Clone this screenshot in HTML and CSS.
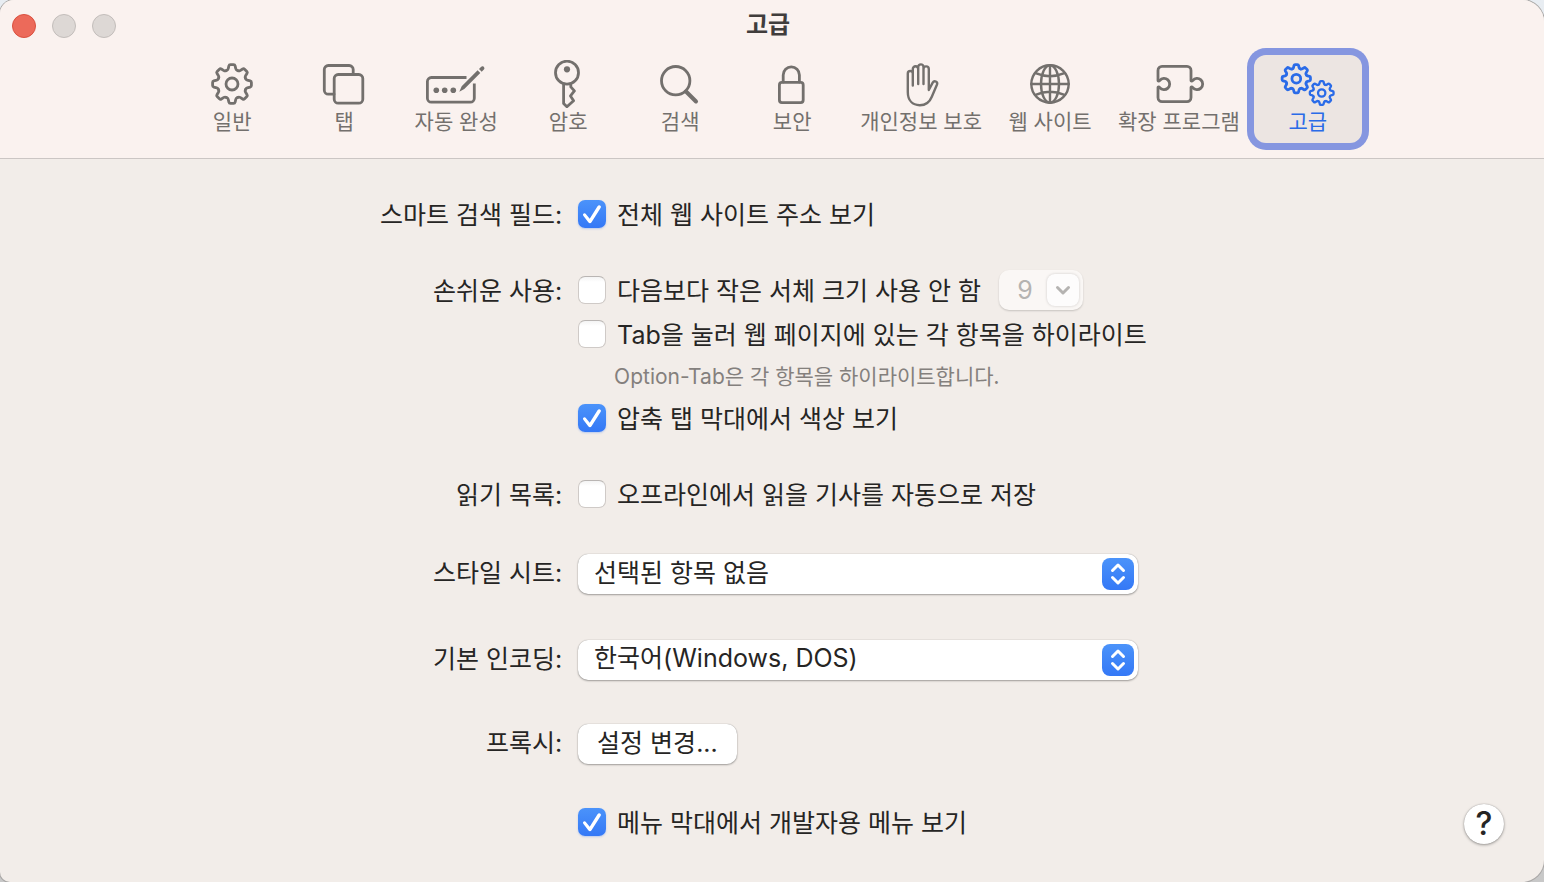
FILE: index.html
```html
<!DOCTYPE html>
<html lang="ko">
<head>
<meta charset="utf-8">
<title>고급</title>
<meta name="viewport" content="width=device-width, initial-scale=1">
<link rel="stylesheet" href="styles.css">
</head>
<body>
<svg class="defs" aria-hidden="true">
  <defs>
    <path id="tooth" d="M-5.6-13.5Q-4.1-13.9-3.8-15.2L-3.1-18.2Q-2.8-19.4-1.6-19.4H1.6Q2.8-19.4 3.1-18.2L3.8-15.2Q4.1-13.9 5.6-13.5"/>
    <g id="gear">
      <use href="#tooth"/><use href="#tooth" transform="rotate(45)"/><use href="#tooth" transform="rotate(90)"/><use href="#tooth" transform="rotate(135)"/>
      <use href="#tooth" transform="rotate(180)"/><use href="#tooth" transform="rotate(225)"/><use href="#tooth" transform="rotate(270)"/><use href="#tooth" transform="rotate(315)"/>
      <circle r="6"/>
    </g>
  </defs>
</svg>
<div class="window">
  <header class="header">
    <div class="titlebar">
      <div class="lights">
        <button class="light light--close" type="button" aria-label="닫기"></button>
        <button class="light" type="button" aria-label="최소화" disabled></button>
        <button class="light" type="button" aria-label="확대" disabled></button>
      </div>
      <h1 class="title">고급</h1>
    </div>
    <nav class="toolbar">
      <button class="tool" type="button">
        <svg class="icon" viewBox="0 0 64 48"><use href="#gear" transform="translate(32 24)"/></svg>
        <span>일반</span>
      </button>
      <button class="tool" type="button">
        <svg class="icon" viewBox="0 0 64 48"><path d="M41.2 14V9.5a4 4 0 0 0-4-4H16.3a4 4 0 0 0-4 4v20.700a4 4 0 0 0 4 4H22"/><rect x="22.200" y="14.500" width="28.600" height="28.700" rx="4"/></svg>
        <span>탭</span>
      </button>
      <button class="tool" type="button">
        <svg class="icon" viewBox="0 0 64 48"><path class="butt" d="M42.500 17.500H7.400a4 4 0 0 0-4 4v16.700a4 4 0 0 0 4 4h38.900a4 4 0 0 0 4-4V23.500"/><g class="solid"><circle cx="12.300" cy="30.300" r="2.800"/><circle cx="20.700" cy="30.300" r="2.800"/><circle cx="29.300" cy="30.300" r="2.800"/><path d="M35.300 31.700l2.400-5.500L53.600 10.200l2.700 2.700L40.300 29zM55 9l2.200-2.200c1.700-1.700 4.400 1 2.700 2.700L57.700 11.700z"/></g></svg>
        <span>자동 완성</span>
      </button>
      <button class="tool" type="button">
        <svg class="icon" viewBox="0 0 64 48"><circle cx="31" cy="12.700" r="11.500"/><circle class="solid" cx="31" cy="9.300" r="3.100"/><path d="M27.600 24v19.500l3.300 3.200 6.700-6-3.100-4.800 3.900-5-3.600-4V24"/></svg>
        <span>암호</span>
      </button>
      <button class="tool" type="button">
        <svg class="icon" viewBox="0 0 64 48"><circle cx="27.700" cy="20.700" r="14.200"/><path class="thick" d="M38 31.500L48 41.500"/></svg>
        <span>검색</span>
      </button>
      <button class="tool" type="button">
        <svg class="icon" viewBox="0 0 64 48"><rect x="19.400" y="22.400" width="23.800" height="20.200" rx="2.500"/><path d="M23.200 22v-7a8.100 8.100 0 0 1 16.200 0v7"/></svg>
        <span>보안</span>
      </button>
      <button class="tool" type="button">
        <svg class="icon icon--fine" viewBox="0 0 64 48"><path d="M23.800 25.500V13.500a2.500 2.500 0 0 0-5 0V32c0 8.500 4.800 13.200 12 13.200 6.800 0 9.800-3 12-8.500L48 24.500c1-2.700-2.700-4.700-4.300-1.800L39.800 30V9a2.600 2.600 0 0 0-5.300 0M34.500 24V7a2.600 2.600 0 0 0-5.300 0v17M29.200 9a2.700 2.700 0 0 0-5.400 0v5"/></svg>
        <span>개인정보 보호</span>
      </button>
      <button class="tool" type="button">
        <svg class="icon icon--fine" viewBox="0 0 64 48"><circle cx="32" cy="24" r="18.700"/><ellipse cx="32" cy="24" rx="9" ry="18.700"/><path d="M32 5.300v37.400M13.300 24h37.400M17.500 13.200q14.500 6 29 0M17.500 34.800q14.500-6 29 0"/></svg>
        <span>웹 사이트</span>
      </button>
      <button class="tool" type="button">
        <svg class="icon" viewBox="0 0 64 48"><path d="M11 20.500V10.400a4 4 0 0 1 4-4h25a4 4 0 0 1 4 4v10.100c0 .8 1 .7 1.700 0a5.600 5.600 0 1 1 0 7c-.7-.7-1.700-.8-1.700 0v10.100a4 4 0 0 1-4 4H15a4 4 0 0 1-4-4V27.500c0-.8 1-.7 1.700 0a5.600 5.600 0 1 0 0-7c-.7.7-1.700.8-1.700 0z"/></svg>
        <span>확장 프로그램</span>
      </button>
      <button class="tool tool--active" type="button" aria-current="page">
        <svg class="icon icon--pair" viewBox="0 0 64 48"><use href="#gear" transform="translate(20.300 18.700) scale(.73)"/><use href="#gear" transform="translate(45.700 33) scale(.61)"/></svg>
        <span>고급</span>
      </button>
    </nav>
  </header>

  <main class="content">
    <form class="form">
      <div class="row">
        <span class="label">스마트 검색 필드<span class="latin">:</span></span>
        <div class="options">
          <label class="check"><input type="checkbox" checked><span class="check-text">전체 웹 사이트 주소 보기</span></label>
        </div>
      </div>
      <div class="row">
        <span class="label label--tall">손쉬운 사용<span class="latin">:</span></span>
        <div class="options">
          <div class="inline">
            <label class="check"><input type="checkbox"><span class="check-text">다음보다 작은 서체 크기 사용 안 함</span></label>
            <div class="combo">
              <input class="combo-input" type="text" value="9" aria-label="최소 서체 크기" disabled>
              <button class="combo-button" type="button" aria-label="서체 크기 목록" disabled>
                <svg viewBox="0 0 32 32"><path d="M10.500 13.500l5.500 5.500 5.500-5.500"/></svg>
              </button>
            </div>
          </div>
          <label class="check"><input type="checkbox" aria-describedby="tab-hint"><span class="check-text"><span class="latin">Tab</span>을 눌러 웹 페이지에 있는 각 항목을 하이라이트</span></label>
          <p class="hint" id="tab-hint"><span class="latin">Option-Tab</span>은 각 항목을 하이라이트합니다.</p>
          <label class="check"><input type="checkbox" checked><span class="check-text">압축 탭 막대에서 색상 보기</span></label>
        </div>
      </div>
      <div class="row row--list">
        <span class="label">읽기 목록<span class="latin">:</span></span>
        <div class="options">
          <label class="check"><input type="checkbox"><span class="check-text">오프라인에서 읽을 기사를 자동으로 저장</span></label>
        </div>
      </div>
      <div class="row row--popup">
        <label class="label label--field" for="stylesheet">스타일 시트<span class="latin">:</span></label>
        <div class="popup">
          <select class="popup-select" id="stylesheet"><option>선택된 항목 없음</option></select>
          <svg class="popup-arrows" viewBox="0 0 32 32" aria-hidden="true"><path d="M10.500 12.500L16 7l5.500 5.500M10.500 19.500L16 25l5.500-5.500"/></svg>
        </div>
      </div>
      <div class="row row--popup">
        <label class="label label--field" for="encoding">기본 인코딩<span class="latin">:</span></label>
        <div class="popup">
          <select class="popup-select popup-select--latin" id="encoding"><option>한국어(Windows, DOS)</option></select>
          <svg class="popup-arrows" viewBox="0 0 32 32" aria-hidden="true"><path d="M10.500 12.500L16 7l5.500 5.500M10.500 19.500L16 25l5.500-5.500"/></svg>
        </div>
      </div>
      <div class="row row--action">
        <span class="label label--field" id="proxy">프록시<span class="latin">:</span></span>
        <div class="options">
          <button class="push" type="button" aria-describedby="proxy">설정 변경<span class="latin">...</span></button>
        </div>
      </div>
      <div class="row row--action">
        <span></span>
        <div class="options">
          <label class="check"><input type="checkbox" checked><span class="check-text">메뉴 막대에서 개발자용 메뉴 보기</span></label>
        </div>
      </div>
    </form>
    <button class="help" type="button" aria-label="도움말">?</button>
  </main>
</div>
</body>
</html>
```
FILE: styles.css
```css
:root {
  --korean: "Noto Sans CJK KR", sans-serif;
  --latin: Inter, "Noto Sans CJK KR", sans-serif;
  --ink: #262524;
  --muted: #73706d;
  --blue: #2a6be8;
  --chip: linear-gradient(#4b93fa, #3478f6);
}

* {
  box-sizing: border-box;
}

body {
  margin: 0;
  background: linear-gradient(#e8edf2, #c8c8c8);
  color: var(--ink);
  font-family: var(--korean);
  font-size: 25px;
  line-height: 28px;
}

button,
input,
select {
  margin: 0;
  padding: 0;
  border: 0;
  color: inherit;
  font: inherit;
}

.defs {
  position: absolute;
  width: 0;
  height: 0;
}

.latin {
  font-family: var(--latin);
  line-height: 20px;
}

.window {
  display: flex;
  flex-direction: column;
  min-height: 100vh;
  overflow: hidden;
  border-radius: 14px 22px 22px 10px;
  background: #f2ede9;
  box-shadow: 0 0 0 1px #a9a7a6;
}

.header {
  padding-bottom: 15px;
  border-bottom: 1px solid #cbc6c4;
  background: #faf2ef;
}

.titlebar {
  display: grid;
  grid-template-columns: 1fr auto 1fr;
  align-items: center;
  height: 52px;
  padding: 0 20px 0 12px;
}

.lights {
  display: flex;
  gap: 16px;
}

.light {
  width: 24px;
  height: 24px;
  border: 1px solid #c2bdba;
  border-radius: 50%;
  background: #ddd8d5;
}

.light--close {
  border-color: #d9503f;
  background: #ec6a5a;
}

.title {
  margin: 0;
  padding-bottom: 6px;
  color: #403d3c;
  font-size: 24px;
  font-weight: 700;
  line-height: 28px;
}

.toolbar {
  display: flex;
  justify-content: center;
  gap: 4px;
  padding: 3px 4px 0 0;
}

.tool {
  display: flex;
  flex-direction: column;
  align-items: center;
  min-width: 108px;
  height: 88px;
  padding: 5px 10px 0;
  border-radius: 12px;
  background: none;
  color: var(--muted);
  font-size: 21px;
  line-height: 24px;
  white-space: nowrap;
}

.tool--active {
  background: #ece5e2;
  color: var(--blue);
  box-shadow: 0 0 0 7px #8596e0;
}

.icon {
  width: 64px;
  height: 48px;
  flex: none;
  fill: none;
  stroke: currentColor;
  stroke-width: 2.8;
  stroke-linecap: round;
  stroke-linejoin: round;
}

.icon--fine {
  stroke-width: 2.4;
}

.icon--pair {
  stroke-width: 3.8;
}

.icon .solid {
  fill: currentColor;
  stroke: none;
}

.icon .butt {
  stroke-linecap: butt;
}

.icon .thick {
  stroke-width: 4;
}

.content {
  display: grid;
  flex: 1;
  grid-template-columns: 1fr auto 1fr;
  align-content: start;
  padding: 41px 40px 38px 14px;
}

.form {
  display: grid;
  grid-column: 2;
  grid-template-columns: auto 560px;
  gap: 42px 16px;
  padding-bottom: 8px;
}

.row {
  display: grid;
  grid-column: 1 / -1;
  grid-template-columns: subgrid;
  align-items: start;
}

.row--list {
  margin-top: 6px;
}

.row--popup {
  margin-top: 4px;
}

.row--action {
  margin-top: 2px;
}

.label {
  line-height: 26px;
  text-align: right;
  white-space: nowrap;
}

.label--tall {
  line-height: 38px;
}

.label--field {
  line-height: 34px;
}

.options {
  display: flex;
  flex-direction: column;
  align-items: flex-start;
  gap: 10px;
}

.inline {
  display: flex;
  align-items: center;
  gap: 18px;
}

.check {
  display: flex;
  align-items: center;
  gap: 11px;
  height: 28px;
  white-space: nowrap;
}

.check-text {
  padding-bottom: 2px;
}

.check input {
  width: 28px;
  height: 28px;
  flex: none;
  appearance: none;
  border: 1px solid #cfcac7;
  border-top-color: #b9b5b3;
  border-radius: 7px;
  background: linear-gradient(#f4f4f4, #fff 5px);
}

.check input:checked {
  border: 0;
  background: var(--chip);
  box-shadow: 0 1px 2px rgb(52 120 246 / 30%);
}

.check input:checked::before {
  display: block;
  width: 28px;
  height: 28px;
  background: #fff;
  clip-path: path("M5.200 15.800C4 14.200 6.400 12.300 7.700 13.900L11.600 18.800L19.600 6C20.800 4.200 23.700 5.800 22.600 7.700L13.400 22.200C12.600 23.400 11.200 23.400 10.400 22.400Z");
  content: "";
}

.hint {
  height: 36px;
  margin: 0;
  padding-left: 36px;
  color: #84807d;
  font-size: 21px;
  line-height: 34px;
  white-space: nowrap;
}

.combo {
  display: flex;
  align-items: center;
  width: 84px;
  height: 40px;
  padding-right: 4px;
  border-radius: 10px;
  background: #faf7f5;
  box-shadow: 0 1px 2px rgb(0 0 0 / 18%);
}

.combo-input {
  width: 48px;
  height: 40px;
  padding-left: 4px;
  background: none;
  color: #b5b3b1;
  font-family: var(--latin);
  text-align: center;
}

.combo-button {
  width: 32px;
  height: 32px;
  border-radius: 8px;
  background: #fdfcfc;
  box-shadow: 0 0 3px rgb(0 0 0 / 18%);
}

.combo-button svg {
  display: block;
  fill: none;
  stroke: #b5b3b1;
  stroke-width: 3;
  stroke-linecap: round;
  stroke-linejoin: round;
}

.popup {
  position: relative;
}

.popup-select,
.push {
  height: 40px;
  border-radius: 10px;
  background: #fff;
  box-shadow: 0 0 1px rgb(0 0 0 / 35%), 0 1px 2px rgb(0 0 0 / 32%);
}

.popup-select {
  display: block;
  width: 100%;
  padding: 0 48px 6px 16px;
  appearance: none;
}

.popup-select--latin {
  padding-bottom: 4px;
  font-family: var(--latin);
}

.popup-arrows {
  position: absolute;
  top: 4px;
  right: 4px;
  width: 32px;
  height: 32px;
  border-radius: 8px;
  background: var(--chip);
  fill: none;
  pointer-events: none;
  stroke: #fff;
  stroke-width: 3;
  stroke-linecap: round;
  stroke-linejoin: round;
}

.push {
  padding: 0 19px 6px;
}

.help {
  grid-column: 3;
  align-self: end;
  justify-self: end;
  width: 40px;
  height: 40px;
  border-radius: 50%;
  background: #fff;
  box-shadow: 0 0 1px rgb(0 0 0 / 35%), 0 1px 3px rgb(0 0 0 / 35%);
  font-family: var(--latin);
  font-size: 32px;
  font-weight: 500;
}
```
